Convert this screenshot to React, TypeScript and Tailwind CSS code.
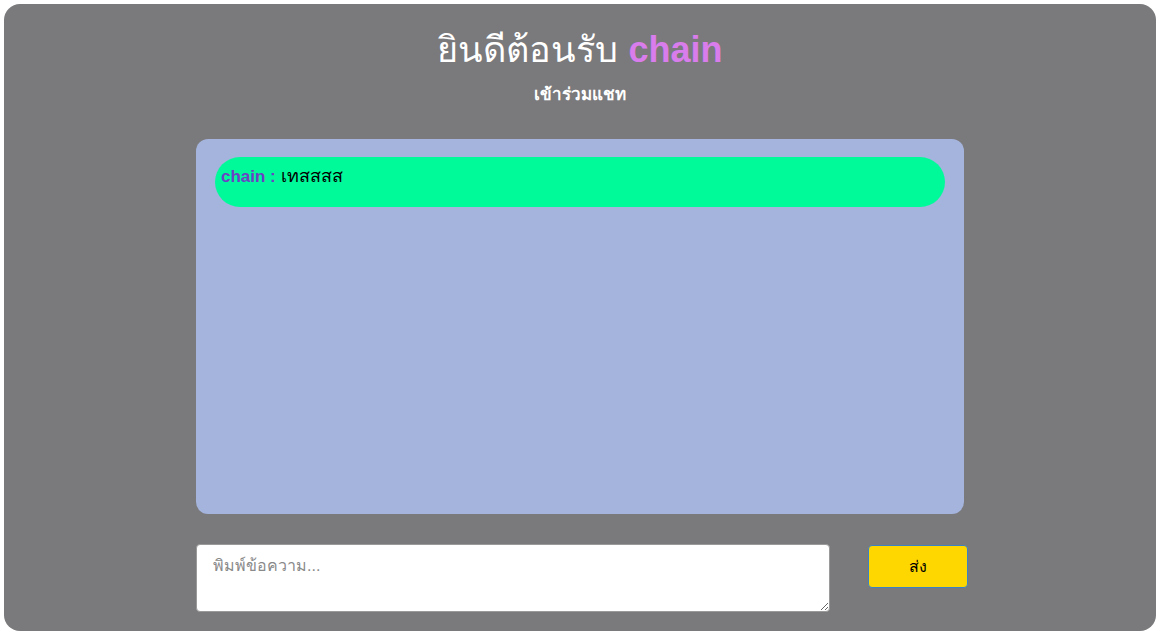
export default function App() {
  return (
    <div className="min-h-screen bg-white font-['Liberation_Sans','Noto_Sans',sans-serif]">
      <div className="ml-[4px] pt-[4px]">
        <div className="w-[1152px] h-[627px] rounded-[16px] bg-[#7a797b] flex flex-col items-center">
          <h1 className="mt-[22px] text-[36px] leading-[48px] text-white">
            ยินดีต้อนรับ <span className="font-bold text-[#d97ded]">chain</span>
          </h1>
          <p className="mt-[10px] text-[17px] leading-[22px] font-bold text-white">เข้าร่วมแชท</p>

          <div className="mt-[33px] w-[768px] h-[375px] rounded-[12px] bg-[#a4b4dc] px-[19px] pt-[18px]">
            <div className="h-[50px] rounded-[25px] bg-[#00fa9a] px-[6px] pt-[8px] text-[17px] leading-[22px]">
              <span className="font-bold text-[#6c42c4]">chain : </span>
              <span className="text-[18px] text-black">เทสสสส</span>
            </div>
          </div>

          <div className="mt-[30px] w-[772px] flex items-start gap-[38px] ml-[4px]">
            <textarea
              placeholder="พิมพ์ข้อความ..."
              className="shrink-0 w-[634px] h-[68px] rounded-[4px] border border-[#9a9a9a] bg-white px-[16px] py-[10px] text-[16px] leading-[22px] text-black placeholder:text-[#8a8a8a] outline-none"
            />
            <button
              type="button"
              className="shrink-0 mt-px w-[100px] h-[43px] rounded-[4px] border border-[#3b82c4] bg-[#ffd700] text-[16px] font-normal text-black"
            >
              ส่ง
            </button>
          </div>
        </div>
      </div>
    </div>
  );
}
